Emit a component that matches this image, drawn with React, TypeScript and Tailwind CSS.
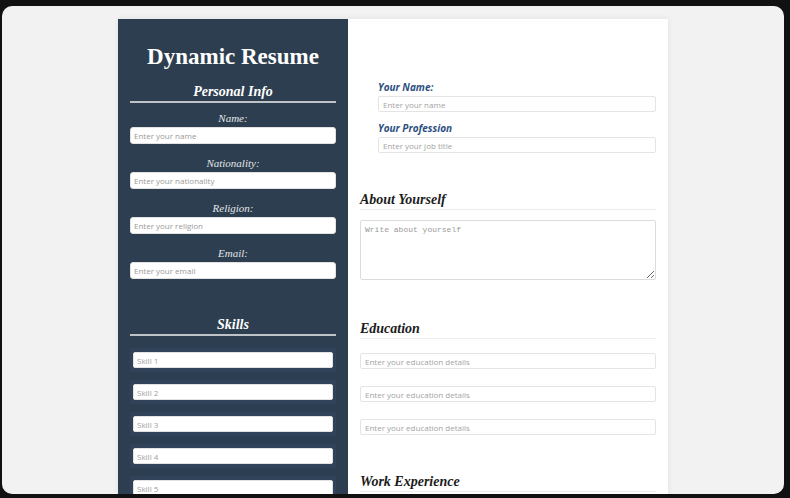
import React from "react";

const serif = "font-['Liberation_Serif',Georgia,serif]";
const sans = "font-['Open_Sans','Liberation_Sans',sans-serif]";

const personalFields = [
  { label: "Name:", placeholder: "Enter your name" },
  { label: "Nationality:", placeholder: "Enter your nationality" },
  { label: "Religion:", placeholder: "Enter your religion" },
  { label: "Email:", placeholder: "Enter your email" },
];

const skills = ["Skill 1", "Skill 2", "Skill 3", "Skill 4", "Skill 5"];

const SideHeading: React.FC<{ children: React.ReactNode }> = ({ children }) => (
  <h2
    className={`${serif} text-center text-[14px] leading-[18px] font-bold italic text-white border-b-2 border-[#bdc3c7]`}
  >
    {children}
  </h2>
);

const MainHeading: React.FC<{ children: React.ReactNode }> = ({ children }) => (
  <h2
    className={`${serif} text-[14px] leading-[18px] font-bold italic text-[#1c1c1c] border-b border-[#ececec]`}
  >
    {children}
  </h2>
);

const App: React.FC = () => {
  return (
    <div className="h-screen w-full bg-[#111111] pt-[6px] pl-[2px] pr-[6px] pb-[4px]">
      <div className="h-full overflow-hidden rounded-[10px] bg-[#f2f2f2] pt-[13px]">
        <div className="mx-auto flex w-[550px] bg-white shadow-[0_0_6px_rgba(0,0,0,0.08)]">
          {/* sidebar */}
          <aside className="w-[230px] shrink-0 bg-[#2c3e50] px-[12px] pt-[24px] pb-[20px]">
            <h1
              className={`${serif} text-center text-[23px] leading-[28px] font-bold text-white`}
            >
              Dynamic Resume
            </h1>

            <div className="mt-[12px]">
              <SideHeading>Personal Info</SideHeading>
              <div className="mt-[8px] flex flex-col gap-[12px]">
                {personalFields.map((f) => (
                  <div key={f.label} className="flex flex-col">
                    <label
                      className={`${serif} text-center text-[11px] leading-[14px] italic text-[#e3e6e8] mb-[2px]`}
                    >
                      {f.label}
                    </label>
                    <input
                      type="text"
                      placeholder={f.placeholder}
                      className={`${sans} block h-[17px] w-full rounded-[3px] border border-[#e2e2e2] bg-white px-[3px] text-[8px] outline-none placeholder:text-[#9a9a9a]`}
                    />
                  </div>
                ))}
              </div>
            </div>

            <div className="mt-[37px]">
              <SideHeading>Skills</SideHeading>
              <div className="mt-[12px] flex flex-col gap-[8px]">
                {skills.map((s) => (
                  <div key={s} className="bg-[#30435a] px-[3px] py-[4px]">
                    <input
                      type="text"
                      placeholder={s}
                      className={`${sans} block h-[16px] w-full rounded-[2px] border border-[#e2e2e2] bg-white px-[3px] text-[8px] outline-none placeholder:text-[#a0a0a0]`}
                    />
                  </div>
                ))}
              </div>
            </div>
          </aside>

          {/* main */}
          <main className="flex-1 px-[12px] pt-[62px] pb-[20px]">
            <div className="pl-[18px] flex flex-col">
              <label
                className={`${sans} text-[10px] leading-[12px] font-bold italic text-[#2d4f7f] mb-[3px]`}
              >
                Your Name:
              </label>
              <input
                type="text"
                placeholder="Enter your name"
                className={`${sans} block h-[16px] w-full rounded-[2px] border border-[#e4e4e4] bg-white px-[4px] text-[8px] outline-none placeholder:text-[#a3a3a3]`}
              />
              <label
                className={`${sans} mt-[10px] text-[10px] leading-[12px] font-bold italic text-[#2d4f7f] mb-[3px]`}
              >
                Your Profession
              </label>
              <input
                type="text"
                placeholder="Enter your job title"
                className={`${sans} block h-[16px] w-full rounded-[2px] border border-[#e4e4e4] bg-white px-[4px] text-[8px] outline-none placeholder:text-[#a3a3a3]`}
              />
            </div>

            <section className="mt-[38px]">
              <MainHeading>About Yourself</MainHeading>
              <textarea
                placeholder="Write about yourself"
                className="mt-[10px] block h-[60px] w-full rounded-[2px] border border-[#dcdcdc] bg-white px-[4px] py-[3px] font-['Liberation_Mono',monospace] text-[8px] outline-none placeholder:text-[#9a9a9a]"
              />
            </section>

            <section className="mt-[40px]">
              <MainHeading>Education</MainHeading>
              <div className="mt-[14px] flex flex-col gap-[17px]">
                {[0, 1, 2].map((i) => (
                  <input
                    key={i}
                    type="text"
                    placeholder="Enter your education details"
                    className={`${sans} block h-[16px] w-full rounded-[2px] border border-[#e4e4e4] bg-white px-[4px] text-[8px] outline-none placeholder:text-[#a3a3a3]`}
                  />
                ))}
              </div>
            </section>

            <section className="mt-[38px]">
              <MainHeading>Work Experience</MainHeading>
            </section>
          </main>
        </div>
      </div>
    </div>
  );
};

export default App;
